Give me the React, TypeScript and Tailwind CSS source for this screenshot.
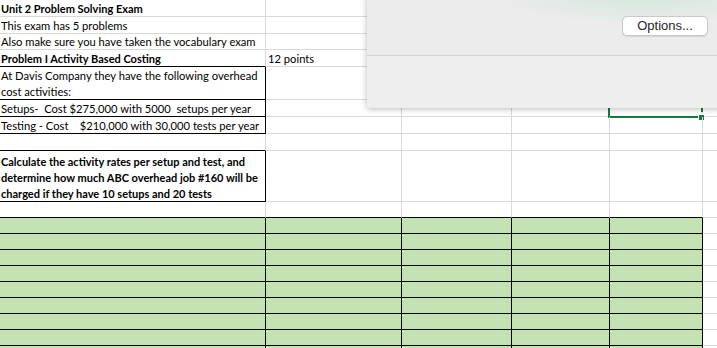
import React from 'react';

const GRID = 'border-[#d9d9d9]';
const GREEN = 'bg-[#c4e3b2]';

const widths = ['w-[266px]', 'w-[136px]', 'w-[110px]', 'w-[98px]', 'w-[93px]'];

type CellProps = {
  w: string;
  right?: boolean;
  bottom?: boolean;
  fill?: boolean;
  children?: React.ReactNode;
  className?: string;
};

const Cell: React.FC<CellProps> = ({ w, right, bottom, fill, children, className = '' }) => (
  <div
    className={`relative shrink-0 border-r border-b ${w} ${right ? 'border-r-black' : 'border-r-[#d9d9d9]'} ${
      bottom ? 'border-b-black' : 'border-b-[#d9d9d9]'
    } ${fill ? GREEN : ''} ${className}`}
  >
    {children}
  </div>
);

type RowSpec = {
  h: string;
  a?: React.ReactNode;
  aBold?: boolean;
  aRight?: boolean;
  aBottom?: boolean;
  rowBottom?: boolean;
  b?: React.ReactNode;
  green?: boolean;
  selected?: boolean;
};

const rows: RowSpec[] = [
  { h: 'h-[17px]', a: 'Unit 2 Problem Solving Exam', aBold: true },
  { h: 'h-[17px]', a: 'This exam has 5 problems' },
  { h: 'h-[16px]', a: 'Also make sure you have taken the vocabulary exam' },
  { h: 'h-[17px]', a: 'Problem I Activity Based Costing', aBold: true, aBottom: true, b: '12 points' },
  {
    h: 'h-[33px]',
    a: (
      <>
        <div>At Davis Company they have the following overhead</div>
        <div>cost activities:</div>
      </>
    ),
    aRight: true,
    aBottom: true,
  },
  { h: 'h-[17px]', a: 'Setups-  Cost $275,000 with 5000  setups per year', aRight: true, aBottom: true, selected: true },
  { h: 'h-[17px]', a: 'Testing - Cost    $210,000 with 30,000 tests per year', aRight: true, aBottom: true },
  { h: 'h-[17px]', aBottom: true },
  {
    h: 'h-[51px]',
    a: (
      <>
        <div>Calculate the activity rates per setup and test, and</div>
        <div>determine how much ABC overhead job #160 will be</div>
        <div>charged if they have 10 setups and 20 tests</div>
      </>
    ),
    aBold: true,
    aRight: true,
    aBottom: true,
  },
  { h: 'h-[16px]', rowBottom: true },
  ...Array.from({ length: 9 }, () => ({ h: 'h-[16px]', green: true, rowBottom: true })),
];

const Selection = () => (
  <div className="pointer-events-none absolute -left-[2px] -top-[1px] bottom-[-2px] right-[-1px]">
    <div className="absolute left-0 top-0 bottom-0 w-[2px] bg-[#157a3f]" />
    <div className="absolute left-0 right-[4px] bottom-0 h-[2px] bg-[#157a3f]" />
    <div className="absolute right-0 top-0 bottom-[6px] w-[2px] bg-[#157a3f]" />
    <div className="absolute -right-[2px] -bottom-[3px] h-[7px] w-[7px] border border-white bg-[#157a3f]" />
  </div>
);

export default function App() {
  return (
    <div className="relative h-[348px] w-[717px] overflow-hidden bg-white font-['Lato',sans-serif] text-[11.2px] text-black">
      <div className="flex flex-col">
        {rows.map((r, i) => (
          <div key={i} className={`flex ${r.h}`}>
            <Cell
              w={widths[0]}
              right={r.aRight || r.green}
              bottom={r.aBottom || r.rowBottom}
              fill={r.green}
              className={`flex flex-col justify-end pl-[1px] leading-[16px] whitespace-pre ${r.aBold ? 'text-[11px] font-bold' : ''}`}
            >
              {r.a && <div className="translate-y-[1px]">{r.a}</div>}
            </Cell>
            <Cell
              w={widths[1]}
              right={r.green}
              bottom={r.rowBottom}
              fill={r.green}
              className="flex flex-col justify-end pl-[2px] leading-[16px]"
            >
              {r.b && <div className="translate-y-[1px]">{r.b}</div>}
            </Cell>
            <Cell w={widths[2]} right={r.green} bottom={r.rowBottom} fill={r.green} />
            <Cell w={widths[3]} right={r.green} bottom={r.rowBottom} fill={r.green} />
            <Cell w={widths[4]} right={r.green} bottom={r.rowBottom} fill={r.green}>
              {r.selected && <Selection />}
            </Cell>
            <div className={`flex-1 border-b ${GRID}`} />
          </div>
        ))}
      </div>

      {/* dialog sheet overlapping the grid */}
      <div className="absolute left-[367px] top-[-4px] h-[112px] w-[360px] bg-[#ececec] shadow-[0_1px_6px_rgba(0,0,0,0.28)]">
        <div className="h-[60px] border-b border-[#d4d4d4] bg-[radial-gradient(ellipse_150px_28px_at_275px_0px,rgba(195,228,208,0.6),rgba(236,236,236,0))]">
          <div className="flex justify-end pr-[19px] pt-[20px]">
            <button className="flex h-[20px] w-[86px] items-center justify-center rounded-[5px] border border-[#c9c9c9] bg-white font-['Liberation_Sans',sans-serif] text-[13px] text-[#262626] shadow-[0_0.5px_1px_rgba(0,0,0,0.1)]">
              Options...
            </button>
          </div>
        </div>
        <div className="h-[51px] bg-[#eeeeee]" />
      </div>
    </div>
  );
}
